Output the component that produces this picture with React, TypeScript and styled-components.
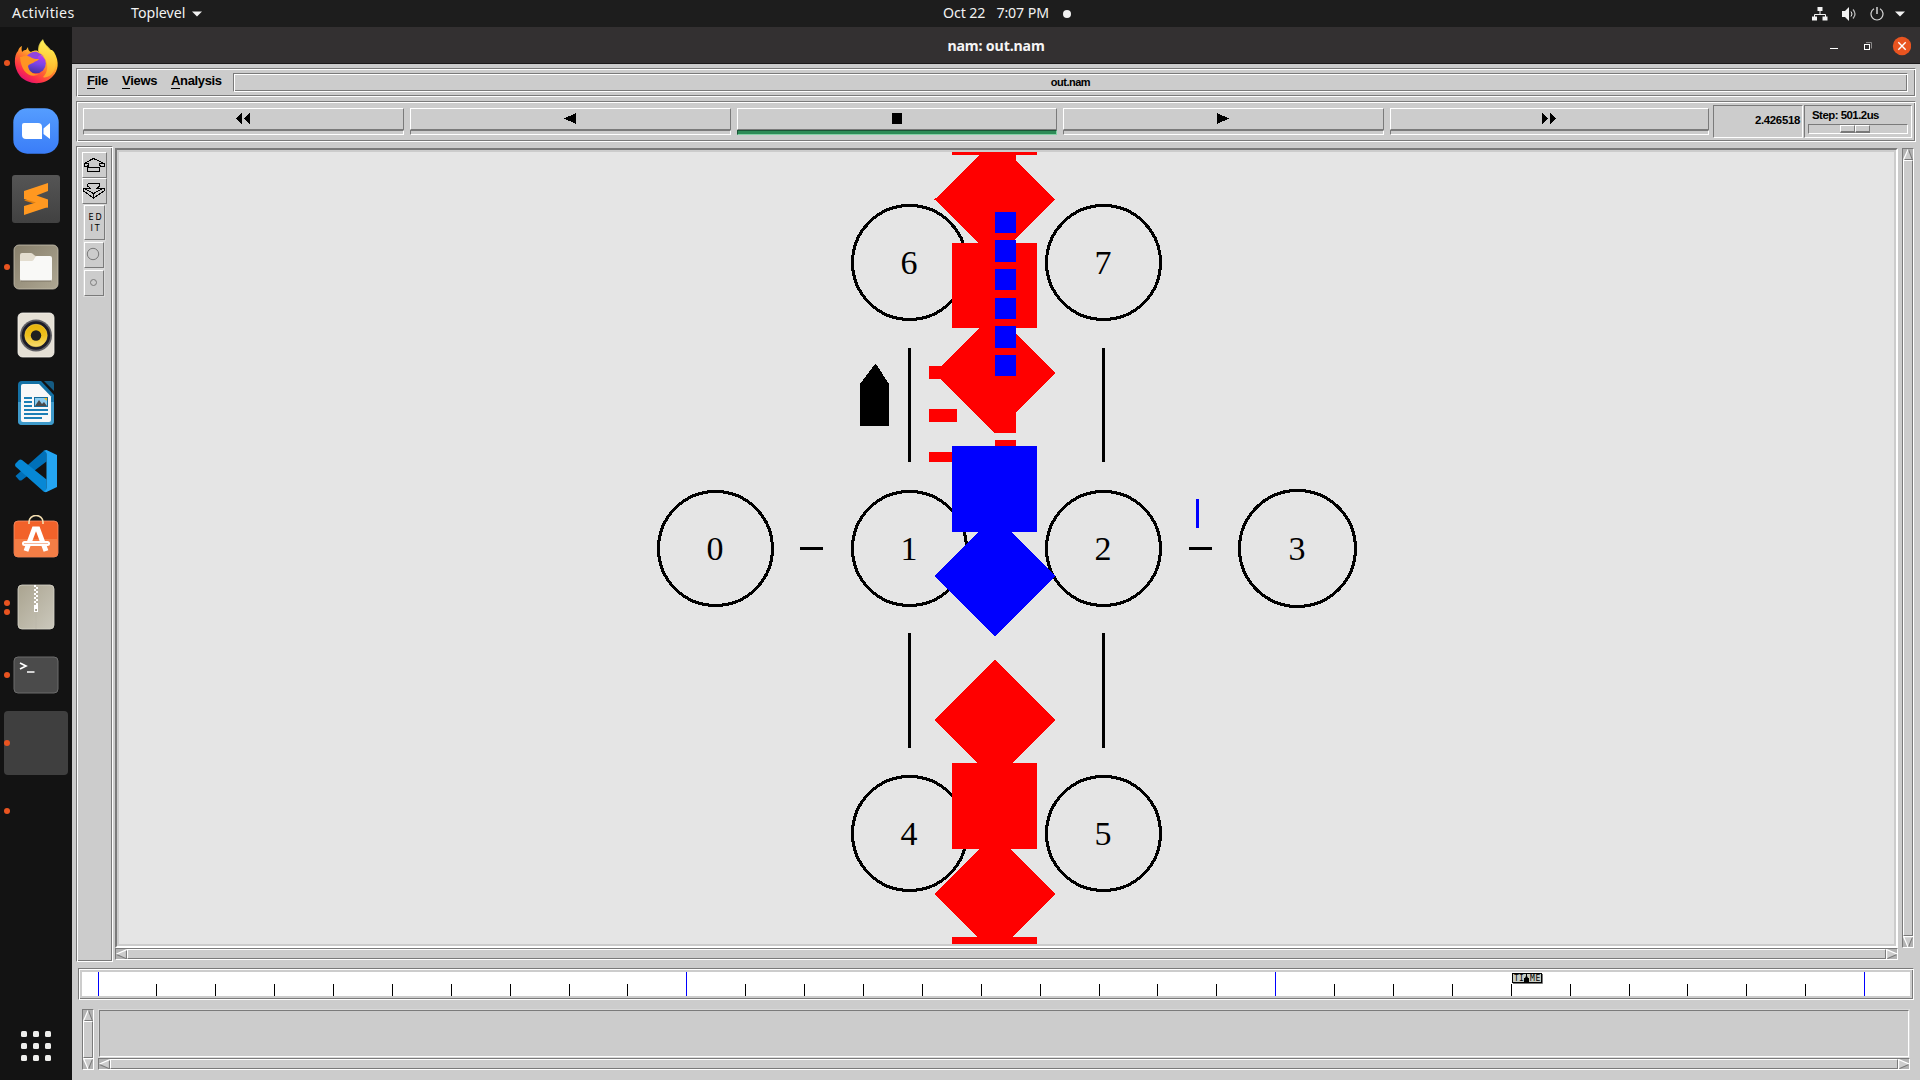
import React from 'react';
import styled, { createGlobalStyle, css } from 'styled-components';

const GREY = '#cccccc';
const DARK = '#7a7a7a';
const TROUGH = '#b2b2b2';

const Global = createGlobalStyle`
  * { box-sizing: border-box; }
  html, body { margin: 0; padding: 0; background: #131313; overflow: hidden; }
  svg { display: block; flex: none; }
`;

const groove = css`
  border: 1px solid;
  border-color: ${DARK} #fff #fff ${DARK};
  box-shadow: inset 1px 1px #fff, inset -1px -1px ${DARK};
  padding: 1px;
`;
const raised = css`
  border: 1px solid;
  border-color: #fff ${DARK} ${DARK} #fff;
`;
const sunken = css`
  border: 1px solid;
  border-color: ${DARK} #fff #fff ${DARK};
`;

/* ---------- desktop shell ---------- */

const Desktop = styled.div`
  width: 1920px;
  height: 1080px;
  display: flex;
  flex-direction: column;
  overflow: hidden;
  font-family: "Noto Sans", sans-serif;
`;
const TopBar = styled.header`
  height: 27px;
  flex: none;
  display: grid;
  grid-template-columns: 1fr auto 1fr;
  align-items: center;
  background: #1d1d1d;
  color: #f2f2f2;
  font-size: 14.2px;
  line-height: 26px;
  white-space: pre;
`;
const TopLeft = styled.div`
  display: flex;
  align-items: center;
  padding-left: 12px;
`;
const BarText = styled.span<{ $w?: number; $ls?: number }>`
  width: ${p => (p.$w ? `${p.$w}px` : 'auto')};
  letter-spacing: ${p => p.$ls ?? 0}px;
  height: 27px;
`;
const Clock = styled.div`
  display: flex;
  align-items: center;
  gap: 11px;
  padding-left: 94px;
`;
const NoticeDot = styled.i`
  width: 8px;
  height: 8px;
  margin-left: 3px;
  border-radius: 50%;
  background: #f2f2f2;
`;
const Tray = styled.div`
  display: flex;
  align-items: center;
  justify-content: flex-end;
  padding-right: 15px;
`;
const TrayIcon = styled.svg<{ $gap: number }>`
  margin-left: ${p => p.$gap}px;
`;
const Body = styled.div`
  flex: 1;
  display: flex;
  min-height: 0;
`;

/* ---------- dock ---------- */

const Dock = styled.nav`
  width: 72px;
  flex: none;
  display: flex;
  flex-direction: column;
  gap: 4px;
  padding: 4px;
  background: #131313;
`;
const DockItem = styled.div<{ $active?: boolean }>`
  height: 64px;
  flex: none;
  display: flex;
  align-items: center;
  border-radius: 4px;
  background: ${p => (p.$active ? '#3f3f3f' : 'transparent')};
`;
const Dots = styled.div`
  width: 8px;
  display: flex;
  flex-direction: column;
  gap: 3px;
`;
const Dot = styled.i`
  width: 6px;
  height: 6px;
  border-radius: 50%;
  background: #e95420;
`;
const AppGrid = styled.div`
  margin: auto 0 15px 17px;
  display: grid;
  grid-template-columns: repeat(3, 6px);
  gap: 6px;
`;
const GridDot = styled.i`
  height: 6px;
  border-radius: 1.5px;
  background: #eeeeec;
`;

/* ---------- window ---------- */

const Window = styled.main`
  flex: 1;
  display: flex;
  flex-direction: column;
  background: ${GREY};
  font-family: "Liberation Sans", Arial, sans-serif;
  color: #000;
`;
const TitleBar = styled.div`
  height: 37px;
  flex: none;
  display: grid;
  grid-template-columns: 1fr auto 1fr;
  align-items: center;
  background: #333031;
  border-bottom: 1px solid #1b191a;
`;
const Title = styled.span`
  grid-column: 2;
  padding-top: 1px;
  font: bold 14.2px/36px "Noto Sans", sans-serif;
  color: #f5f5f5;
  letter-spacing: -0.15px;
`;
const Controls = styled.div`
  display: flex;
  justify-content: flex-end;
  padding-right: 9px;
`;
const Client = styled.div`
  flex: 1;
  display: flex;
  flex-direction: column;
  padding: 4px 4px 0;
`;
const MenuBar = styled.div`
  ${groove}
  height: 29px;
  display: flex;
  padding: 4px 7px 0 10px;
`;
const MenuItem = styled.span<{ $w: number; $ls: number }>`
  width: ${p => p.$w}px;
  font-weight: bold;
  font-size: 13px;
  line-height: 15px;
  letter-spacing: ${p => p.$ls}px;
  white-space: nowrap;
`;
const Mnemonic = styled.span`
  display: inline-block;
  height: 16px;
  border-bottom: 1px solid #000;
`;
const FileLabel = styled.div`
  ${groove}
  flex: 1;
  height: 19px;
  text-align: center;
  font-weight: bold;
  font-size: 11px;
  line-height: 14px;
  letter-spacing: -0.5px;
`;
const ToolBar = styled.div`
  ${groove}
  height: 41px;
  margin-top: 4px;
  padding: 3px 3px 0 6px;
  display: flex;
`;
const Transport = styled.div`
  width: 1626px;
  margin: 3px 4px 0 0;
  display: grid;
  grid-template-columns: 321px 321px 320px 321px 319px;
  gap: 6px;
`;
const TransportBtn = styled.div`
  display: flex;
  flex-direction: column;
`;
const TransportFace = styled.div`
  ${raised}
  height: 22px;
  display: flex;
  justify-content: center;
  padding: 4px 1px 0 0;
`;
const TransportLamp = styled.div<{ $on?: boolean }>`
  height: 5px;
  border: 1px solid;
  border-color: ${p => (p.$on ? '#1b5536 #86d0a6 #86d0a6 #1b5536' : `${DARK} #fff #fff ${DARK}`)};
  background: ${p => (p.$on ? '#2e8b57' : GREY)};
`;
const TimeBox = styled.div`
  ${sunken}
  width: 90px;
  height: 33px;
  margin-right: 1px;
  padding: 7px 2px 0 0;
  text-align: right;
  font-weight: bold;
  font-size: 11.4px;
  line-height: 14px;
  letter-spacing: -0.3px;
`;
const StepBox = styled.div`
  ${sunken}
  width: 108px;
  height: 33px;
  padding: 3px 3px 0;
`;
const StepText = styled.div`
  height: 15px;
  padding: 0 0 0 4px;
  font-weight: bold;
  font-size: 11.4px;
  line-height: 13px;
  letter-spacing: -0.5px;
  white-space: nowrap;
`;
const StepTrough = styled.div`
  ${sunken}
  height: 10px;
  padding-left: 31px;
  display: flex;
`;
const ThumbHalf = styled.i`
  width: 15px;
  height: 8px;
  border: solid;
  border-width: 1px 1px 2px 1px;
  border-color: #fff ${DARK} ${DARK} #fff;
  background: ${GREY};
`;

const WorkRow = styled.div`
  display: flex;
  height: 816px;
  margin-top: 4px;
`;
const ToolColumn = styled.div`
  ${groove}
  width: 37px;
  margin-right: 2px;
  padding: 5px 0 0 5px;
`;
const ToolBtn = styled.div<{ $w: number; $h: number; $ring?: boolean }>`
  ${raised}
  width: ${p => p.$w}px;
  height: ${p => p.$h}px;
  margin: ${p => (p.$ring ? '1px 0 2px 2px' : '0')};
  outline: ${p => (p.$ring ? '1px solid #d9d9d9' : 'none')};
  display: flex;
  justify-content: ${p => (p.$ring ? 'center' : 'flex-start')};
  align-items: center;
`;
const EditText = styled.div`
  font: 8px/11px "DejaVu Sans", sans-serif;
  text-align: center;
  padding: 0 0 0 3px;
  letter-spacing: 2px;
  white-space: pre;
`;
const CanvasColumn = styled.div`
  width: 1783px;
  margin: 2px 4px 0 0;
`;
const CanvasFrame = styled.div`
  height: 800px;
  border: 2px solid;
  border-color: ${DARK} #fff #fff ${DARK};
  padding: 2px;
`;
const Bar = styled.div<{ $vertical?: boolean; $len?: number }>`
  ${sunken}
  display: flex;
  flex: none;
  flex-direction: ${p => (p.$vertical ? 'column' : 'row')};
  background: ${TROUGH};
  ${p => (p.$vertical ? `width: 12px; height: ${p.$len}px;` : 'height: 12px; align-self: stretch;')}
`;
const BarThumb = styled.div`
  ${raised}
  flex: 1;
  background: ${GREY};
`;
const VSlot = styled.div`
  padding-top: 2px;
`;
const Timeline = styled.div`
  ${groove}
  height: 32px;
  margin: 6px 2px 0;
  padding: 3px;
`;
const Bottom = styled.div`
  display: flex;
  gap: 4px;
  margin: 9px 6px 0;
`;
const BottomColumn = styled.div`
  flex: 1;
  display: flex;
  flex-direction: column;
`;
const NotePane = styled.div`
  ${sunken}
  height: 47px;
  margin: 1px;
  outline: 1px solid #d9d9d9;
`;

/* ---------- small drawings ---------- */

const arrowShapes = {
  left: { fill: '0,5 10,0 10,10', light: 'M10 .5 L.5 5', dark: 'M.5 5.5 L10 10 M9.5 0 V10' },
  right: { fill: '0,0 10,5 0,10', light: 'M.5 10 V.5 L10 5', dark: 'M10 5.5 L.5 10' },
  up: { fill: '5,0 10,10 0,10', light: 'M.5 10 L5 .5', dark: 'M5.5 .5 L9.5 10 M0 9.5 H10' },
  down: { fill: '0,0 10,0 5,10', light: 'M10 .5 H.5 L5 10', dark: 'M9.5 1 L5.5 10' },
};
const Arrow = ({ dir }: { dir: keyof typeof arrowShapes }) => {
  const s = arrowShapes[dir];
  const flat = dir === 'left' || dir === 'right';
  return (
    <svg width={flat ? 11 : 10} height={flat ? 10 : 11} viewBox="0 0 10 10" preserveAspectRatio="none">
      <polygon points={s.fill} fill={GREY} />
      <path d={s.dark} stroke={DARK} fill="none" />
      <path d={s.light} stroke="#fff" strokeWidth="1.2" fill="none" />
    </svg>
  );
};
const HBar = () => (
  <Bar><Arrow dir="left" /><BarThumb /><Arrow dir="right" /></Bar>
);
const VBar = ({ len }: { len: number }) => (
  <Bar $vertical $len={len}><Arrow dir="up" /><BarThumb /><Arrow dir="down" /></Bar>
);

const transport = [
  { id: 'rewind', w: 14, d: 'M6 0V11L0 5.5Z M14 0V11L8 5.5Z' },
  { id: 'back', w: 12, d: 'M12 0V11L0 5.5Z' },
  { id: 'stop', w: 10, d: 'M0 0H10V11H0Z' },
  { id: 'play', w: 12, d: 'M0 0V11L12 5.5Z' },
  { id: 'forward', w: 14, d: 'M0 0V11L6 5.5Z M8 0V11L14 5.5Z' },
];

/* ---------- dock icons ---------- */

const Firefox = () => (
  <svg width="48" height="48" viewBox="0 0 48 48">
    <defs>
      <linearGradient id="ff1" x1=".8" y1=".1" x2=".25" y2=".95">
        <stop offset="0" stopColor="#fff14a" /><stop offset=".35" stopColor="#ffb52a" />
        <stop offset=".6" stopColor="#ff6a30" /><stop offset=".82" stopColor="#ff3048" /><stop offset="1" stopColor="#e3126e" />
      </linearGradient>
      <linearGradient id="ff2" x1=".6" y1="0" x2=".4" y2="1">
        <stop offset="0" stopColor="#c53af0" /><stop offset=".5" stopColor="#7b45e8" /><stop offset="1" stopColor="#45319f" />
      </linearGradient>
      <linearGradient id="ff3" x1="0" y1="0" x2="0" y2="1">
        <stop offset="0" stopColor="#fff45a" /><stop offset="1" stopColor="#ffb327" />
      </linearGradient>
    </defs>
    <path d="M10 7c-1 3 0 5 0 6 2-2 3-2 4-2l2-3c0 3 1 4 3 5 3-2 7-2 8 0 0-6 1-9 4-12 1 5 5 7 7 10l2 0 2 2c6 10 4 19-1 24-9 10-25 9-33 0C1 28 2 16 6 12c1-3 2-4 4-5Z" fill="url(#ff1)" />
    <path d="M26 12c0-6 2-9 5-12 1 5 5 7 8 11 6 8 6 19 0 25-3 2-7 3-8 2 6-5 7-18-5-26Z" fill="url(#ff3)" opacity=".8" />
    <circle cx="24" cy="24.500" r="9.800" fill="url(#ff2)" />
    <path d="M15 17c2-3 7-5 10-4l7 4c-2-1-5-1-6 1-1 2 0 3 2 3-3 1-5 3-8 3s-5 1-5 3c-2-3-2-7 0-10Z" fill="#9145dc" />
    <path d="M8 18c5-1 8-2 12 1 2 1 4 1 7 1-1 2-4 2-6 4-2 1-4 1-5 3 1 7 7 9 11 8-8 5-18-1-19-17Z" fill="#ff9422" />
  </svg>
);
const Zoom = () => (
  <svg width="48" height="48" viewBox="0 0 48 48">
    <defs><linearGradient id="zm" x1="0" y1="0" x2="0" y2="1"><stop offset="0" stopColor="#559dff" /><stop offset="1" stopColor="#3a7df8" /></linearGradient></defs>
    <rect x="1.3" y="1.3" width="45.4" height="45.4" rx="14" fill="url(#zm)" />
    <path d="M12 16h14a4 4 0 0 1 4 4v12H14a4 4 0 0 1-4-4V18a2 2 0 0 1 2-2ZM31.500 21.500L38 16V32L31.500 27Z" fill="#fff" />
  </svg>
);
const Sublime = () => (
  <svg width="48" height="48" viewBox="0 0 48 48">
    <defs><linearGradient id="sb" x1="0" y1="0" x2="0" y2="1"><stop offset="0" stopColor="#555" /><stop offset="1" stopColor="#414141" /></linearGradient></defs>
    <rect width="48" height="48" rx="3" fill="url(#sb)" />
    <path d="M12 25.500L36 33V26L24 21.500Z" fill="#dc7c10" />
    <path d="M12 16L36 8V16L24.500 20.500L36 24.500V32L12 40V31L24 27.500L12 24Z" fill="#ff9820" />
  </svg>
);
const Files = () => (
  <svg width="48" height="48" viewBox="0 0 48 48">
    <defs><linearGradient id="fl" x1="0" y1="0" x2="1" y2="1"><stop offset="0" stopColor="#877f6b" /><stop offset="1" stopColor="#aea793" /></linearGradient></defs>
    <rect x="2" y="2" width="44" height="44" rx="5" fill="url(#fl)" stroke="#c5bfae" strokeWidth=".8" />
    <path d="M8 22V12a2 2 0 0 1 2-2h9c2 0 3 3 5 3h5v9Z" fill="#e3ddcf" />
    <path d="M8 18h12c2 0 3-5 5-5h13a2 2 0 0 1 2 2v21a2 2 0 0 1-2 2H10a2 2 0 0 1-2-2Z" fill="#f9f9f7" />
    <path d="M9 38h30" stroke="#7d7564" />
  </svg>
);
const Rhythmbox = () => (
  <svg width="48" height="48" viewBox="0 0 48 48">
    <defs><linearGradient id="rb" x1="0" y1="0" x2="0" y2="1"><stop offset="0" stopColor="#e7b30b" /><stop offset=".5" stopColor="#eec01c" /><stop offset="1" stopColor="#f7dc72" /></linearGradient></defs>
    <rect x="6" y="2" width="36" height="44" rx="4.500" fill="#e5e0d5" stroke="#f5f2ec" strokeWidth=".8" />
    <circle cx="24" cy="24.500" r="16" fill="#606065" />
    <circle cx="24" cy="24.500" r="14.300" fill="#1c1c28" />
    <circle cx="24" cy="24.500" r="11.200" fill="url(#rb)" stroke="#f5d14c" strokeWidth=".6" />
    <circle cx="24" cy="24.500" r="5.200" fill="#202020" />
  </svg>
);
const Writer = () => (
  <svg width="48" height="48" viewBox="0 -1 48 48">
    <path d="M10 1H29L42 15V41a4 4 0 0 1-4 4H10a4 4 0 0 1-4-4V5a4 4 0 0 1 4-4Z" fill="#1471a5" />
    <path d="M6 22H42V41a4 4 0 0 1-4 4H10a4 4 0 0 1-4-4Z" fill="#3f9aca" />
    <path d="M11 4H27L39 16.500V40a2 2 0 0 1-2 2H11a2 2 0 0 1-2-2V6a2 2 0 0 1 2-2Z" fill="#f8f8f8" />
    <path d="M32 1h7a3 3 0 0 1 3 3v7Z" fill="#155b83" />
    <path d="M12 18h8M12 22h8M12 26h8M12 30h24M12 34h24M12 38h18" stroke="#1c7fb6" strokeWidth="2" />
    <rect x="22.500" y="17.500" width="13" height="9" fill="#8ccbee" stroke="#166c9b" />
    <path d="M23 26l4-6 3 4 2-2 3 4Z" fill="#4a4a4a" /><path d="M32 18h3v3Z" fill="#f3bb20" />
  </svg>
);
const VsCode = () => (
  <svg width="48" height="48" viewBox="0 -.5 48 48">
    <path d="M3.500 28.500L7 32.500Q8.500 33.500 10 32.500L34.500 14V3Q32.500 2.500 31 4L3.500 28.500Z" fill="#0070b8" />
    <path d="M3.500 16L7 12.500Q8.500 11.500 10 12.500L34.500 32V44.500Q32.500 45 31 43.500L3.500 19Q2.500 17.500 3.500 16Z" fill="#0788d5" />
    <path d="M31 3.500L34.500 2.500L45 7.500V39.500L34.500 44.500L31 43.500Q34.500 44 34.500 40V7Q34.500 3 31 3.500Z" fill="#24a5f2" />
  </svg>
);
const Software = () => (
  <svg width="48" height="48" viewBox="0 4 48 48">
    <rect x="2" y="10" width="44" height="36" rx="4" fill="#f2622a" stroke="#f8926b" strokeWidth=".8" />
    <path d="M2.500 28h43v14a4 4 0 0 1-4 4h-35a4 4 0 0 1-4-4Z" fill="#f47e46" />
    <path d="M17 13V11a7 6.500 0 0 1 14 0V13" fill="none" stroke="#f3deb0" strokeWidth="1.600" />
    <path d="M14 40L22.200 18h3.600L34 40" fill="none" stroke="#fff" strokeWidth="5" />
    <path d="M12.500 32.500h23" stroke="#fff" strokeWidth="5" strokeLinecap="round" />
    <path d="M12 32.500h24" stroke="#f6b99b" strokeWidth="1" />
  </svg>
);
const Archive = () => (
  <svg width="48" height="48" viewBox="0 0 48 48">
    <defs><linearGradient id="ar" x1="0" y1="0" x2="1" y2="1"><stop offset="0" stopColor="#aaa490" /><stop offset="1" stopColor="#cbc8bc" /></linearGradient></defs>
    <rect x="6" y="2" width="36" height="44" rx="4" fill="url(#ar)" stroke="#d8d6ca" strokeWidth=".8" />
    <path d="M24 26V46" stroke="#bbb7a8" strokeWidth=".6" />
    <path d="M23 2V22" stroke="#fff" strokeWidth="2" strokeDasharray="2 2" />
    <path d="M25 4V22" stroke="#fff" strokeWidth="2" strokeDasharray="2 2" />
    <path d="M22 22h4v7h-4Z" fill="#fff" /><path d="M23.300 26h1.500v2h-1.500Z" fill="#8d8775" />
  </svg>
);
const TerminalIcon = () => (
  <svg width="48" height="48" viewBox="0 0 48 48">
    <rect x="2" y="6" width="44" height="36" rx="4" fill="#4b4b4b" stroke="#6c6c6c" />
    <path d="M8 12l6 3-6 3" fill="none" stroke="#fff" strokeWidth="1.700" /><path d="M15 21h7.500" stroke="#fff" strokeWidth="1.500" />
  </svg>
);

const dock: { id: string; icon?: React.ReactNode; dots: number; active?: boolean }[] = [
  { id: 'firefox', icon: <Firefox />, dots: 1 },
  { id: 'zoom', icon: <Zoom />, dots: 0 },
  { id: 'sublime', icon: <Sublime />, dots: 0 },
  { id: 'files', icon: <Files />, dots: 1 },
  { id: 'rhythmbox', icon: <Rhythmbox />, dots: 0 },
  { id: 'writer', icon: <Writer />, dots: 0 },
  { id: 'vscode', icon: <VsCode />, dots: 0 },
  { id: 'software', icon: <Software />, dots: 0 },
  { id: 'archive', icon: <Archive />, dots: 2 },
  { id: 'terminal', icon: <TerminalIcon />, dots: 1 },
  { id: 'nam', dots: 1, active: true },
  { id: 'console', dots: 1 },
];

/* ---------- network topology ---------- */

const nodes = [
  { n: 0, x: 715.5, y: 548.5, r: 57 },
  { n: 1, x: 909.5, y: 548.5, r: 57 },
  { n: 2, x: 1103.5, y: 548.5, r: 57 },
  { n: 3, x: 1297.5, y: 548.5, r: 58 },
  { n: 4, x: 909.5, y: 833.5, r: 57 },
  { n: 5, x: 1103.5, y: 833.5, r: 57 },
  { n: 6, x: 909.5, y: 262.5, r: 57 },
  { n: 7, x: 1103.5, y: 262.5, r: 57 },
];
const links = ['M909.5 348V462', 'M1103.5 348V462', 'M909.5 633V748', 'M1103.5 633V748', 'M800 548.5H823', 'M1189 548.5H1212'];
const redRects = [
  [952, 152, 85, 3], [995, 152, 21, 24], [952, 243, 85, 85], [929, 366, 28, 13], [929, 409, 28, 13],
  [929, 452, 28, 10], [995, 326, 21, 22], [995, 412, 21, 21], [995, 440, 21, 8], [952, 763, 85, 86], [952, 937, 85, 7],
];
const blueRects = [
  [995, 212, 21, 21], [995, 240, 21, 22], [995, 269, 21, 21], [995, 298, 21, 21],
  [995, 326, 21, 22], [995, 355, 21, 21], [952, 446, 85, 86], [1196, 499, 3, 29],
];
const Diamond = ({ cy, fill }: { cy: number; fill: string }) => (
  <polygon points={`934.500,${cy} 995,${cy - 60} 1055,${cy} 995,${cy + 60}`} fill={fill} />
);
const Topology = () => (
  <svg width="1775" height="792" viewBox="119 152 1775 792">
    <rect x="119" y="152" width="1775" height="792" fill="#e5e5e5" />
    <g shapeRendering="crispEdges">
      {links.map(d => <path key={d} d={d} stroke="#000" strokeWidth="3" />)}
      {nodes.map(c => <circle key={c.n} cx={c.x} cy={c.y} r={c.r} fill="none" stroke="#000" strokeWidth="3.100" />)}
      <path d="M860 426V384L875 364H876L889 384V426Z" />
      {redRects.map(([x, y, w, h]) => <rect key={`${x}-${y}`} x={x} y={y} width={w} height={h} fill="#f00" />)}
      {[199.5, 373, 720, 894].map(cy => <Diamond key={cy} cy={cy} fill="#f00" />)}
      <Diamond cy={576} fill="#00f" />
      {blueRects.map(([x, y, w, h]) => <rect key={`${x}-${y}`} x={x} y={y} width={w} height={h} fill="#00f" />)}
    </g>
    <g fontFamily='"Liberation Serif", serif' fontSize="34" textAnchor="middle">
      {nodes.map(c => <text key={c.n} x={c.x - 0.5} y={c.y + 11.5}>{c.n}</text>)}
    </g>
  </svg>
);

const ticks = Array.from({ length: 31 }, (_, i) => Math.floor(98 + 58.885 * i));
const Ruler = () => (
  <svg width="1828" height="24" viewBox="82 972 1828 24">
    <rect x="82" y="972" width="1828" height="24" fill="#fff" />
    {ticks.map((x, i) => (
      <rect key={x} x={x} y={i % 10 ? 984 : 972} width="1" height={i % 10 ? 12 : 24} fill={i % 10 ? '#000' : '#00f'} shapeRendering="crispEdges" />
    ))}
    <path d="M1513 983.500H1542.500V974" stroke="#777" fill="none" />
    <rect x="1512.500" y="973.500" width="29" height="9" fill="#c8ccc4" stroke="#000" />
    <g fontFamily='"DejaVu Sans Mono", monospace' fontSize="8">
      <text x="1514 1519" y="981">TI</text>
      <text x="1530 1535.500" y="981">ME</text>
    </g>
    <path d="M1526 973h1v3l1 2h1v5h-5v-5h1l1-2Z" />
  </svg>
);

export default function App() {
  return (
    <Desktop>
      <Global />
      <TopBar>
        <TopLeft>
          <BarText $w={119} $ls={0.35}>Activities</BarText>
          <BarText $w={61}>Toplevel</BarText>
          <svg width="10" height="6" viewBox="0 0 10 6"><path d="M0 .5H10L5 5.500Z" fill="#f2f2f2" /></svg>
        </TopLeft>
        <Clock>
          <BarText $ls={-0.1}>Oct 22</BarText>
          <BarText $ls={-0.1}>7:07 PM</BarText>
          <NoticeDot />
        </Clock>
        <Tray>
          <TrayIcon $gap={0} width="16" height="14" viewBox="0 0 16 14">
            <path d="M8 3v4M2.500 10V7.500h11V10" stroke="#f2f2f2" fill="none" />
            <path d="M5.500 0h5v4h-5ZM0 9.500h5v4H0ZM10.500 9.500h5v4h-5Z" fill="#f2f2f2" />
          </TrayIcon>
          <TrayIcon $gap={14} width="15" height="14" viewBox="0 0 15 14">
            <path d="M0 4h3l4-4v14l-4-4H0Z" fill="#f2f2f2" />
            <path d="M9 4.500q2 2.500 0 5" stroke="#f2f2f2" fill="none" />
            <path d="M11 2.500q4 4.500 0 9" stroke="#b5b5b5" fill="none" strokeWidth="1.300" />
          </TrayIcon>
          <TrayIcon $gap={13} width="14" height="14" viewBox="0 0 14 14">
            <path d="M4 1.800a6 6 0 1 0 6 0" stroke="#d8d8d8" fill="none" strokeWidth="1.200" /><path d="M7 0v7" stroke="#f2f2f2" strokeWidth="1.300" />
          </TrayIcon>
          <TrayIcon $gap={11} width="10" height="6" viewBox="0 0 10 6"><path d="M0 .5H10L5 5.500Z" fill="#f2f2f2" /></TrayIcon>
        </Tray>
      </TopBar>
      <Body>
        <Dock>
          {dock.map(d => (
            <DockItem key={d.id} $active={d.active}>
              <Dots>{Array.from({ length: d.dots }, (_, i) => <Dot key={i} />)}</Dots>
              {d.icon}
            </DockItem>
          ))}
          <AppGrid>{Array.from({ length: 9 }, (_, i) => <GridDot key={i} />)}</AppGrid>
        </Dock>
        <Window>
          <TitleBar>
            <Title>nam: out.nam</Title>
            <Controls>
              <svg width="82" height="20" viewBox="1829 35 82 20">
                <path d="M1830 47.500h8" stroke="#fff" />
                <rect x="1864.500" y="43.500" width="5" height="5" fill="none" stroke="#fff" />
                <path d="M1866 41.500h5.500v6" stroke="#8b8989" fill="none" />
                <circle cx="1902" cy="45" r="9.200" fill="#e95420" />
                <path d="M1898.300 41.300l7.400 7.400m0-7.400l-7.400 7.400" stroke="#fff" strokeWidth="1.400" />
              </svg>
            </Controls>
          </TitleBar>
          <Client>
            <MenuBar>
              <MenuItem $w={35} $ls={-0.4}><Mnemonic>F</Mnemonic>ile</MenuItem>
              <MenuItem $w={49} $ls={-0.35}><Mnemonic>V</Mnemonic>iews</MenuItem>
              <MenuItem $w={62} $ls={-0.35}><Mnemonic>A</Mnemonic>nalysis</MenuItem>
              <FileLabel>out.nam</FileLabel>
            </MenuBar>
            <ToolBar>
              <Transport>
                {transport.map(t => (
                  <TransportBtn key={t.id}>
                    <TransportFace>
                      <svg width={t.w} height="11" shapeRendering="crispEdges"><path d={t.d} /></svg>
                    </TransportFace>
                    <TransportLamp $on={t.id === 'stop'} />
                  </TransportBtn>
                ))}
              </Transport>
              <TimeBox>2.426518</TimeBox>
              <StepBox>
                <StepText>Step: 501.2us</StepText>
                <StepTrough><ThumbHalf /><ThumbHalf /></StepTrough>
              </StepBox>
            </ToolBar>
            <WorkRow>
              <ToolColumn>
                <ToolBtn $w={25} $h={26}>
                  <svg width="22" height="16" viewBox="0 0 22 16" shapeRendering="crispEdges">
                    <path d="M10.500 1.500L1 6.500V9.500H5.500M10.500 1.500L21 6.500V9.500H16.500M1 6.500H6M21 6.500H16M6 6.500L4.500 9.500M16 6.500L17.500 9.500M4.500 10.500H16.500V14.500H4.500Z" stroke="#000" fill="none" />
                  </svg>
                </ToolBtn>
                <ToolBtn $w={25} $h={26}>
                  <svg width="22" height="16" viewBox="0 0 22 16" shapeRendering="crispEdges">
                    <path d="M5 .5H16.500V3L14.500 5H21V8L10.500 15L.5 8V5H7L4.500 3V.5M.5 5L10.500 10.500L21 5M10.500 10.500V15" stroke="#000" fill="none" />
                  </svg>
                </ToolBtn>
                <ToolBtn $w={21} $h={35} $ring><EditText>{'ED\nIT'}</EditText></ToolBtn>
                <ToolBtn $w={20} $h={26} $ring>
                  <svg width="18" height="24" viewBox="0 0 18 24"><circle cx="8" cy="11" r="5.700" fill="none" stroke={DARK} /></svg>
                </ToolBtn>
                <ToolBtn $w={20} $h={26} $ring>
                  <svg width="18" height="24" viewBox="0 0 18 24"><circle cx="8.500" cy="11.500" r="3" fill="none" stroke={DARK} /></svg>
                </ToolBtn>
              </ToolColumn>
              <CanvasColumn>
                <CanvasFrame><Topology /></CanvasFrame>
                <HBar />
              </CanvasColumn>
              <VSlot><VBar len={800} /></VSlot>
            </WorkRow>
            <Timeline><Ruler /></Timeline>
            <Bottom>
              <VBar len={61} />
              <BottomColumn>
                <NotePane />
                <HBar />
              </BottomColumn>
            </Bottom>
          </Client>
        </Window>
      </Body>
    </Desktop>
  );
}
